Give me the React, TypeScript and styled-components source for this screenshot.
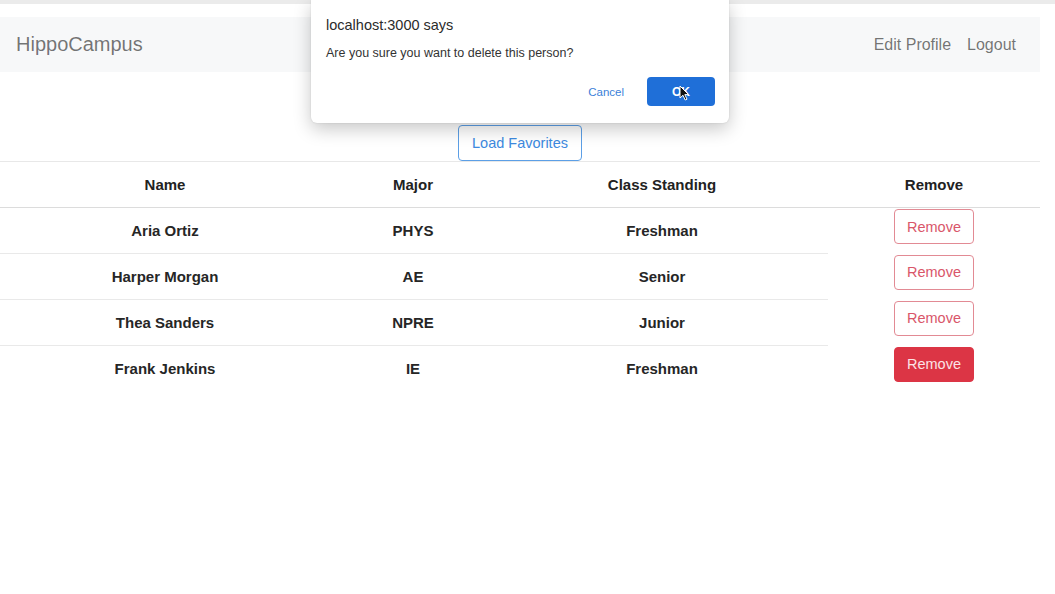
import React from "react";
import styled, { createGlobalStyle } from "styled-components";

const GlobalStyle = createGlobalStyle`
  html, body { margin: 0; padding: 0; background: #fff; }
  body { font-family: "Liberation Sans", Arial, Helvetica, sans-serif; }
  * { box-sizing: border-box; }
`;

const Root = styled.div`
  position: relative;
  width: 1055px;
  height: 594px;
  overflow: hidden;
  background: #fff;
`;

const TopStrip = styled.div`
  height: 4px;
  background: #ebebeb;
`;

const Page = styled.div`
  width: 1040px;
  padding-top: 13px;
`;

const Navbar = styled.nav`
  display: flex;
  align-items: center;
  justify-content: space-between;
  height: 55px;
  padding: 0 16px;
  background: #f7f8f9;
`;

const Brand = styled.span`
  font-size: 20px;
  color: rgba(0, 0, 0, 0.55);
`;

const NavLinks = styled.div`
  display: flex;
`;

const NavLink = styled.span`
  padding: 0 8px;
  font-size: 16px;
  color: rgba(0, 0, 0, 0.55);
`;

const Actions = styled.div`
  display: flex;
  justify-content: center;
  padding-top: 53px;
`;

const LoadButton = styled.button`
  width: 124px;
  height: 36px;
  background: #fff;
  border: 1px solid #5c9fe6;
  border-radius: 4px;
  color: #3d8ae0;
  font-family: inherit;
  font-size: 14.5px;
  padding: 0;
`;

const Table = styled.table`
  width: 1040px;
  border-collapse: collapse;
  table-layout: fixed;
`;

const Th = styled.th`
  height: 46px;
  padding: 0;
  border-top: 1px solid #e8e8e8;
  border-bottom: 1px solid #dcdcdc;
  font-size: 15px;
  font-weight: bold;
  color: #222;
  text-align: center;
  vertical-align: middle;
`;

const Td = styled.td<{ $line: boolean }>`
  height: 46px;
  padding: 0;
  border-top: ${(p) => (p.$line ? "1px solid #e9e9e9" : "none")};
  font-size: 15px;
  font-weight: bold;
  color: #262626;
  text-align: center;
  vertical-align: middle;
`;

const ActionTd = styled.td`
  height: 46px;
  padding: 1px 0 0;
  vertical-align: top;
  text-align: center;
`;

const RemoveButton = styled.button<{ $active: boolean }>`
  width: 80px;
  height: 35px;
  border-radius: 4px;
  border: 1px solid ${(p) => (p.$active ? "#dc3545" : "#e28a94")};
  background: ${(p) => (p.$active ? "#dc3545" : "#fff")};
  color: ${(p) => (p.$active ? "#fbe3e6" : "#d9566a")};
  font-family: inherit;
  font-size: 14.5px;
  padding: 0;
`;

const Dialog = styled.div`
  position: absolute;
  left: 311px;
  top: 0;
  width: 418px;
  height: 123px;
  display: flex;
  flex-direction: column;
  padding: 16px 14px 17px 15px;
  background: #fff;
  border-radius: 0 0 6px 6px;
  box-shadow: 0 6px 18px rgba(0, 0, 0, 0.22), 0 0 2px rgba(0, 0, 0, 0.12);
`;

const DialogTitle = styled.div`
  font-size: 14.5px;
  line-height: 18px;
  color: #2b2b2b;
`;

const DialogMessage = styled.div`
  margin-top: 10px;
  font-size: 12.5px;
  line-height: 18px;
  color: #333;
`;

const DialogButtons = styled.div`
  margin-top: 15px;
  display: flex;
  justify-content: flex-end;
  align-items: center;
  gap: 23px;
`;

const CancelButton = styled.button`
  border: none;
  background: none;
  padding: 0;
  font-family: inherit;
  font-size: 11.5px;
  color: #3b7fd9;
`;

const OkButton = styled.button`
  position: relative;
  width: 68px;
  height: 29px;
  border: none;
  border-radius: 4px;
  background: #1f6fd8;
  color: #fff;
  font-family: inherit;
  font-size: 12px;
  font-weight: bold;
  padding: 0;
`;

const Cursor = styled.svg`
  position: absolute;
  left: 32px;
  top: 8px;
`;

const people = [
  { name: "Aria Ortiz", major: "PHYS", standing: "Freshman" },
  { name: "Harper Morgan", major: "AE", standing: "Senior" },
  { name: "Thea Sanders", major: "NPRE", standing: "Junior" },
  { name: "Frank Jenkins", major: "IE", standing: "Freshman" },
];

export default function App() {
  return (
    <Root>
      <GlobalStyle />
      <TopStrip />
      <Page>
        <Navbar>
          <Brand>HippoCampus</Brand>
          <NavLinks>
            <NavLink>Edit Profile</NavLink>
            <NavLink>Logout</NavLink>
          </NavLinks>
        </Navbar>
        <Actions>
          <LoadButton>Load Favorites</LoadButton>
        </Actions>
        <Table>
          <colgroup>
            <col style={{ width: 330 }} />
            <col style={{ width: 166 }} />
            <col style={{ width: 332 }} />
            <col style={{ width: 212 }} />
          </colgroup>
          <thead>
            <tr>
              <Th>Name</Th>
              <Th>Major</Th>
              <Th>Class Standing</Th>
              <Th>Remove</Th>
            </tr>
          </thead>
          <tbody>
            {people.map((p, i) => (
              <tr key={p.name}>
                <Td $line={i > 0}>{p.name}</Td>
                <Td $line={i > 0}>{p.major}</Td>
                <Td $line={i > 0}>{p.standing}</Td>
                <ActionTd>
                  <RemoveButton $active={i === 3}>Remove</RemoveButton>
                </ActionTd>
              </tr>
            ))}
          </tbody>
        </Table>
      </Page>
      <Dialog>
        <DialogTitle>localhost:3000 says</DialogTitle>
        <DialogMessage>Are you sure you want to delete this person?</DialogMessage>
        <DialogButtons>
          <CancelButton>Cancel</CancelButton>
          <OkButton>
            OK
            <Cursor width="11" height="16" viewBox="0 0 11 16">
              <path
                d="M1 1 L1 13 L4 10.3 L6.2 15 L8 14.2 L5.8 9.6 L9.6 9.6 Z"
                fill="#111"
                stroke="#fff"
                strokeWidth="1"
                strokeLinejoin="round"
              />
            </Cursor>
          </OkButton>
        </DialogButtons>
      </Dialog>
    </Root>
  );
}
